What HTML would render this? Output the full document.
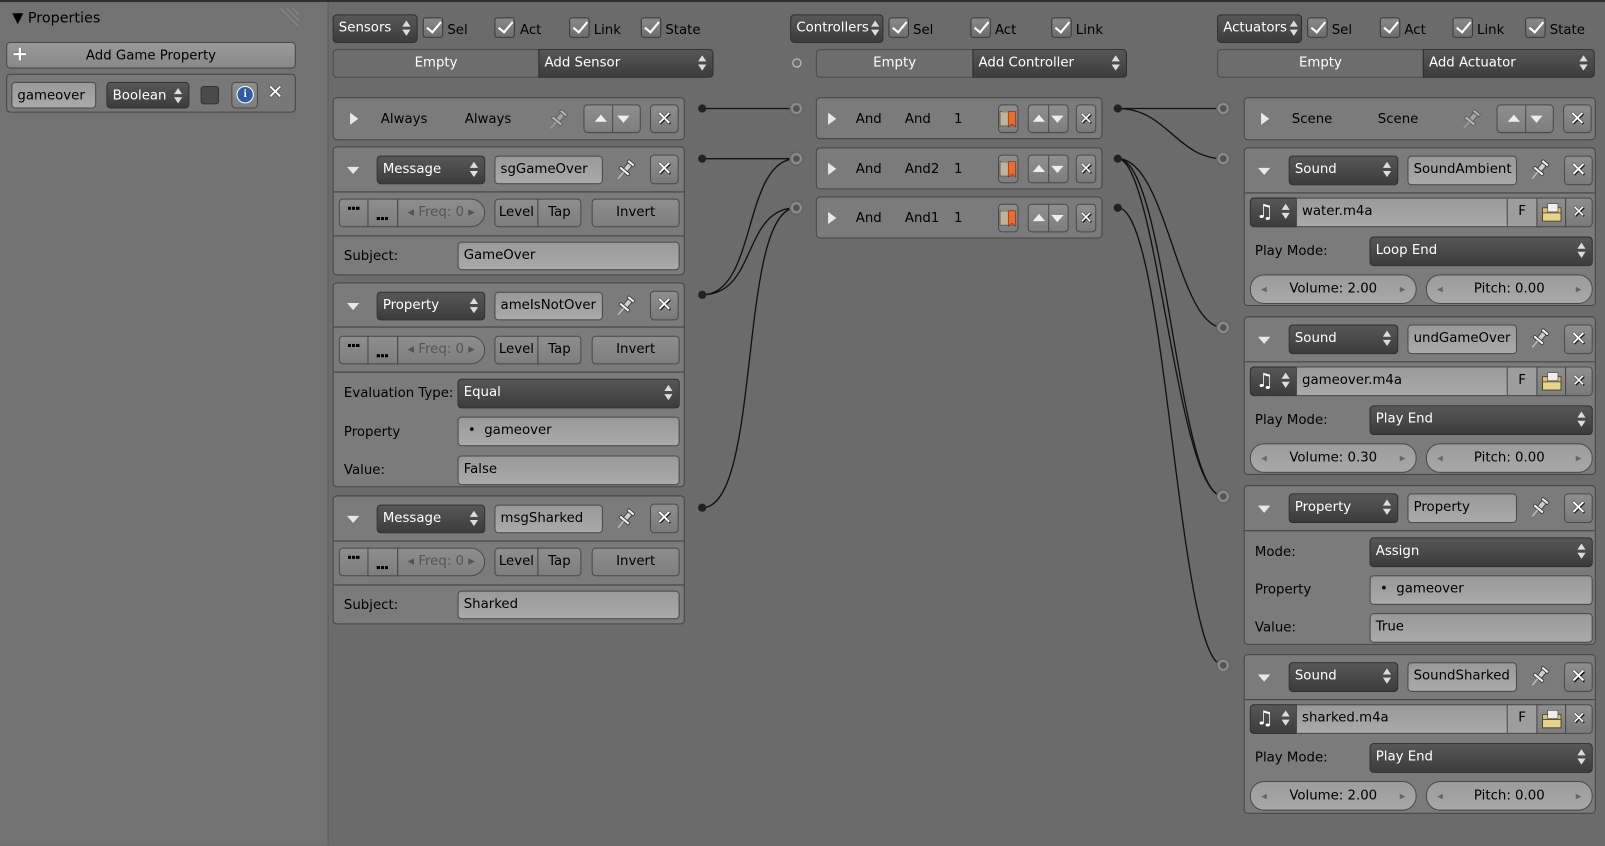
<!DOCTYPE html>
<html><head><meta charset="utf-8"><style>
*{box-sizing:border-box;margin:0;padding:0}
body{width:1605px;height:826px;overflow:hidden;background:#6b6b6b;font-family:"DejaVu Sans","Liberation Sans",sans-serif;font-size:13px;color:#000;position:relative}
#w{position:absolute;left:0;top:0;width:1568px;height:807px;transform:scale(1.02360);transform-origin:0 0}
.a{position:absolute}
.t{position:absolute;white-space:nowrap;line-height:16px}
.box{position:absolute;background:#7b7b7b;border:1px solid #454545;border-radius:4px}
.dd{position:absolute;background:linear-gradient(#575757,#3c3c3c);border:1px solid #2c2c2c;border-radius:4px;color:#fff;padding-left:5px;line-height:26px;white-space:nowrap}
.fld{position:absolute;background:linear-gradient(#999,#aaa);border:1px solid #4a4a4a;border-radius:4px;padding-left:5px;line-height:26px;white-space:nowrap;overflow:hidden}
.btn{position:absolute;background:linear-gradient(#8e8e8e,#7e7e7e);border:1px solid #4a4a4a;border-radius:4px;text-align:center;line-height:26px;white-space:nowrap}
.ud{position:absolute;right:6px;top:5px;width:8px;height:16px}
.ud:before{content:"";position:absolute;left:0;top:0;border-left:4px solid transparent;border-right:4px solid transparent;border-bottom:6px solid #ddd}
.ud:after{content:"";position:absolute;left:0;top:9px;border-left:4px solid transparent;border-right:4px solid transparent;border-top:6px solid #ddd}
.x{position:absolute;background:linear-gradient(#8e8e8e,#7a7a7a);border:1px solid #4a4a4a;border-radius:4px;color:#fff;text-align:center;font-weight:bold;font-size:19px;line-height:26px;text-shadow:0 0 1px #000,0 0 1px #000,1px 1px 0 #222}
.sep{position:absolute;left:0;right:0;height:1px;background:#3e3e3e}
.tri{position:absolute;width:0;height:0;border-top:6px solid transparent;border-bottom:6px solid transparent;border-left:8px solid #e8e8e8}
.trid{position:absolute;width:0;height:0;border-left:6px solid transparent;border-right:6px solid transparent;border-top:7px solid #e8e8e8}
.cb{position:absolute;width:20px;height:20px;background:linear-gradient(#8a8a8a,#6e6e6e);border:1px solid #3a3a3a;border-radius:3px}
.cb:after{content:"";position:absolute;left:6px;top:0px;width:6px;height:12px;border-right:2px solid #fff;border-bottom:2px solid #fff;transform:rotate(40deg)}
.updn{position:absolute;height:28px;width:56px;border:1px solid #4a4a4a;border-radius:4px;background:linear-gradient(#8e8e8e,#7e7e7e)}
.updn i{position:absolute;top:0;bottom:0;left:50%;width:1px;background:#4a4a4a}
.updn b{position:absolute;left:10px;top:9px;border-left:6px solid transparent;border-right:6px solid transparent;border-bottom:7px solid #eee}
.updn u{position:absolute;right:10px;top:10px;border-left:6px solid transparent;border-right:6px solid transparent;border-top:7px solid #eee}
.pill{position:absolute;background:linear-gradient(#9c9c9c,#a8a8a8);border:1px solid #4a4a4a;border-radius:14px;text-align:center;line-height:27px;white-space:nowrap}
.pill:before{content:"◂";position:absolute;left:10px;color:#666;font-size:11px}
.pill:after{content:"▸";position:absolute;right:10px;color:#666;font-size:11px}
.dot{position:absolute;width:8px;height:8px;border-radius:50%;background:#222}
.sock{position:absolute;width:14px;height:14px;border-radius:50%;background:radial-gradient(#555 30%,#999 40%,#444 80%)}
.pin{position:absolute;width:22px;height:22px}
.d3{position:absolute;left:8px;width:12px;height:3px;background:repeating-linear-gradient(90deg,#000 0 3px,transparent 3px 4px)}
.bk{position:absolute;width:20px;height:28px}
</style></head><body><div id="w">
<svg width="0" height="0" style="position:absolute"><defs>
<g id="pin"><g transform="rotate(40 11 11)"><rect x="7" y="1" width="8" height="3" rx="1" fill="#eee" stroke="#333" stroke-width=".8"/><rect x="8.5" y="4" width="5" height="7" fill="#ccc" stroke="#333" stroke-width=".8"/><rect x="5" y="11" width="12" height="3" rx="1" fill="#eee" stroke="#333" stroke-width=".8"/><path d="M11 14v8" stroke="#bbb" stroke-width="1.5"/></g></g>
<g id="bk"><rect x="2" y="7" width="12" height="14" fill="#bcb59c" stroke="#555" stroke-width=".8"/><rect x="4" y="5" width="10" height="3" fill="#8e8a7c"/><path d="M10 7h7v15l-3.5-3-3.5 3z" fill="#ef6a2c" stroke="#7a2a10" stroke-width=".6"/></g>
<g id="fold"><rect x="3" y="7" width="18" height="13" fill="#d6c27c" stroke="#4a3e1a" stroke-width=".8"/><rect x="8" y="3" width="10" height="8" fill="#eee" stroke="#444" stroke-width=".6"/><rect x="3" y="12" width="18" height="8" fill="#e6d38e" stroke="#4a3e1a" stroke-width=".8"/></g>
</defs></svg>
<div class="a" style="left:0;top:0;width:1568px;height:2px;background:#2e2e2e"></div>
<div class="a" style="left:0;top:2px;width:320px;height:824px;background:#727272"></div>
<div class="a" style="left:320px;top:2px;width:1px;height:824px;background:#5c5c5c"></div>
<svg class="a" style="left:272px;top:6px" width="22" height="22"><path d="M2 2l18 18M8 2l12 12M14 2l6 6" stroke="#8a8a8a" stroke-width="1"/></svg>
<div class="t" style="left:12px;top:10px;font-size:14px">▼ Properties</div>
<div class="btn" style="left:6px;top:41px;width:283px;height:26px;background:linear-gradient(#9a9a9a,#888)">Add Game Property</div>
<div class="t" style="left:11px;top:44px;font-size:20px;font-weight:bold;color:#fff;text-shadow:0 0 1px #000">+</div>
<div class="box" style="left:6px;top:72px;width:283px;height:38px;background:#787878"></div>
<div class="fld" style="left:11px;top:80px;width:83px;height:26px">gameover</div>
<div class="dd" style="left:104px;top:80px;width:81px;height:26px">Boolean<span class="ud"></span></div>
<div class="a" style="left:196px;top:84px;width:18px;height:18px;background:#4a4a4a;border:1px solid #333;border-radius:3px"></div>
<div class="btn" style="left:226px;top:80px;width:26px;height:26px"></div>
<div class="a" style="left:231px;top:84px;width:17px;height:17px;border-radius:50%;background:#2d5fa0;border:1px solid #fff;color:#fff;font-size:11px;font-weight:bold;text-align:center;line-height:15px;font-family:'Liberation Serif',serif">i</div>
<div class="t" style="left:261px;top:82px;color:#fff;font-weight:bold;font-size:19px;text-shadow:0 0 1px #000,0 0 1px #000">✕</div>

<div class="dd" style="left:325px;top:14px;width:83px;height:28px">Sensors<span class="ud"></span></div>
<div class="cb" style="left:413px;top:17px"></div><div class="t" style="left:437px;top:22px">Sel</div>
<div class="cb" style="left:483px;top:17px"></div><div class="t" style="left:508px;top:22px">Act</div>
<div class="cb" style="left:556px;top:17px"></div><div class="t" style="left:580px;top:22px">Link</div>
<div class="cb" style="left:626px;top:17px"></div><div class="t" style="left:650px;top:22px">State</div>
<div class="btn" style="left:325px;top:48px;width:202px;height:28px;background:#6d6d6d;color:#fff;border-radius:4px 0 0 4px">Empty</div>
<div class="dd" style="left:526px;top:48px;width:171px;height:28px;border-radius:0 4px 4px 0">Add Sensor<span class="ud"></span></div>

<div class="box" style="left:325px;top:95px;width:344px;height:42px">
 <div class="tri" style="left:16px;top:14px"></div>
 <div class="t" style="left:46px;top:13px">Always</div><div class="t" style="left:128px;top:13px">Always</div>
 <svg class="pin" style="left:208px;top:10px;opacity:.5"><use href="#pin"/></svg>
 <div class="updn" style="left:244px;top:6px"><i></i><b></b><u></u></div>
 <div class="x" style="left:309px;top:6px;width:28px;height:28px">✕</div>
</div>
<div class="box" style="left:325px;top:143px;width:344px;height:126px">
 <div class="trid" style="left:13px;top:19px"></div>
 <div class="dd" style="left:42px;top:8px;width:106px;height:28px">Message<span class="ud"></span></div>
 <div class="fld" style="left:157px;top:8px;width:106px;height:28px">sgGameOver</div>
 <svg class="pin" style="left:274px;top:11px"><use href="#pin"/></svg>
 <div class="x" style="left:309px;top:7px;width:28px;height:29px">✕</div>
 <div class="sep" style="top:43px"></div>
 <div class="btn" style="left:5px;top:50px;width:29px;height:28px;border-radius:4px 0 0 4px"><span class="d3" style="top:7px"></span></div>
 <div class="btn" style="left:33px;top:50px;width:30px;height:28px;border-radius:0"><span class="d3" style="top:17px"></span></div>
 <div class="btn" style="left:62px;top:50px;width:86px;height:28px;border-radius:0 14px 14px 0;color:#555">◂ Freq: 0 ▸</div>
 <div class="btn" style="left:157px;top:50px;width:43px;height:28px;border-radius:4px 0 0 4px">Level</div>
 <div class="btn" style="left:199px;top:50px;width:43px;height:28px;border-radius:0 4px 4px 0">Tap</div>
 <div class="btn" style="left:252px;top:50px;width:86px;height:28px">Invert</div>
 <div class="sep" style="top:86px"></div>
 <div class="t" style="left:10px;top:99px">Subject:</div>
 <div class="fld" style="left:121px;top:92px;width:217px;height:28px">GameOver</div>
</div>
<div class="box" style="left:325px;top:276px;width:344px;height:200px">
 <div class="trid" style="left:13px;top:19px"></div>
 <div class="dd" style="left:42px;top:8px;width:106px;height:28px">Property<span class="ud"></span></div>
 <div class="fld" style="left:157px;top:8px;width:106px;height:28px">ameIsNotOver</div>
 <svg class="pin" style="left:274px;top:11px"><use href="#pin"/></svg>
 <div class="x" style="left:309px;top:7px;width:28px;height:29px">✕</div>
 <div class="sep" style="top:42px"></div>
 <div class="btn" style="left:5px;top:51px;width:29px;height:28px;border-radius:4px 0 0 4px"><span class="d3" style="top:7px"></span></div>
 <div class="btn" style="left:33px;top:51px;width:30px;height:28px;border-radius:0"><span class="d3" style="top:17px"></span></div>
 <div class="btn" style="left:62px;top:51px;width:86px;height:28px;border-radius:0 14px 14px 0;color:#555">◂ Freq: 0 ▸</div>
 <div class="btn" style="left:157px;top:51px;width:43px;height:28px;border-radius:4px 0 0 4px">Level</div>
 <div class="btn" style="left:199px;top:51px;width:43px;height:28px;border-radius:0 4px 4px 0">Tap</div>
 <div class="btn" style="left:252px;top:51px;width:86px;height:28px">Invert</div>
 <div class="sep" style="top:86px"></div>
 <div class="t" style="left:10px;top:100px">Evaluation Type:</div>
 <div class="dd" style="left:121px;top:93px;width:217px;height:29px">Equal<span class="ud"></span></div>
 <div class="t" style="left:10px;top:138px">Property</div>
 <div class="fld" style="left:121px;top:130px;width:217px;height:29px">&nbsp;• &nbsp;gameover</div>
 <div class="t" style="left:10px;top:175px">Value:</div>
 <div class="fld" style="left:121px;top:168px;width:217px;height:29px">False</div>
</div>
<div class="box" style="left:325px;top:484px;width:344px;height:126px">
 <div class="trid" style="left:13px;top:19px"></div>
 <div class="dd" style="left:42px;top:8px;width:106px;height:28px">Message<span class="ud"></span></div>
 <div class="fld" style="left:157px;top:8px;width:106px;height:28px">msgSharked</div>
 <svg class="pin" style="left:274px;top:11px"><use href="#pin"/></svg>
 <div class="x" style="left:309px;top:7px;width:28px;height:29px">✕</div>
 <div class="sep" style="top:43px"></div>
 <div class="btn" style="left:5px;top:50px;width:29px;height:28px;border-radius:4px 0 0 4px"><span class="d3" style="top:7px"></span></div>
 <div class="btn" style="left:33px;top:50px;width:30px;height:28px;border-radius:0"><span class="d3" style="top:17px"></span></div>
 <div class="btn" style="left:62px;top:50px;width:86px;height:28px;border-radius:0 14px 14px 0;color:#555">◂ Freq: 0 ▸</div>
 <div class="btn" style="left:157px;top:50px;width:43px;height:28px;border-radius:4px 0 0 4px">Level</div>
 <div class="btn" style="left:199px;top:50px;width:43px;height:28px;border-radius:0 4px 4px 0">Tap</div>
 <div class="btn" style="left:252px;top:50px;width:86px;height:28px">Invert</div>
 <div class="sep" style="top:86px"></div>
 <div class="t" style="left:10px;top:99px">Subject:</div>
 <div class="fld" style="left:121px;top:92px;width:217px;height:28px">Sharked</div>
</div>

<div class="dd" style="left:772px;top:14px;width:91px;height:28px">Controllers<span class="ud" style="right:3px"></span></div>
<div class="cb" style="left:868px;top:17px"></div><div class="t" style="left:892px;top:22px">Sel</div>
<div class="cb" style="left:948px;top:17px"></div><div class="t" style="left:972px;top:22px">Act</div>
<div class="cb" style="left:1027px;top:17px"></div><div class="t" style="left:1051px;top:22px">Link</div>
<div class="a" style="left:774px;top:57px;width:9px;height:9px;border-radius:50%;border:1px solid #ccc"></div>
<div class="btn" style="left:797px;top:48px;width:154px;height:28px;background:#6d6d6d;color:#fff;border-radius:4px 0 0 4px">Empty</div>
<div class="dd" style="left:950px;top:48px;width:151px;height:28px;border-radius:0 4px 4px 0">Add Controller<span class="ud"></span></div>

<div class="box" style="left:797px;top:95px;width:280px;height:41px">
 <div class="tri" style="left:11px;top:14px"></div><div class="t" style="left:38px;top:13px">And</div><div class="t" style="left:86px;top:13px">And</div><div class="t" style="left:134px;top:13px">1</div>
 <div class="btn" style="left:177px;top:6px;width:20px;height:28px"></div><svg class="bk" style="left:177px;top:6px"><use href="#bk"/></svg>
 <div class="updn" style="left:206px;top:6px;width:40px"><i></i><b style="left:4px"></b><u style="right:4px"></u></div>
 <div class="x" style="left:253px;top:6px;width:20px;height:28px;font-size:16px">✕</div>
</div>
<div class="box" style="left:797px;top:144px;width:280px;height:41px">
 <div class="tri" style="left:11px;top:14px"></div><div class="t" style="left:38px;top:13px">And</div><div class="t" style="left:86px;top:13px">And2</div><div class="t" style="left:134px;top:13px">1</div>
 <div class="btn" style="left:177px;top:6px;width:20px;height:28px"></div><svg class="bk" style="left:177px;top:6px"><use href="#bk"/></svg>
 <div class="updn" style="left:206px;top:6px;width:40px"><i></i><b style="left:4px"></b><u style="right:4px"></u></div>
 <div class="x" style="left:253px;top:6px;width:20px;height:28px;font-size:16px">✕</div>
</div>
<div class="box" style="left:797px;top:192px;width:280px;height:41px">
 <div class="tri" style="left:11px;top:14px"></div><div class="t" style="left:38px;top:13px">And</div><div class="t" style="left:86px;top:13px">And1</div><div class="t" style="left:134px;top:13px">1</div>
 <div class="btn" style="left:177px;top:6px;width:20px;height:28px"></div><svg class="bk" style="left:177px;top:6px"><use href="#bk"/></svg>
 <div class="updn" style="left:206px;top:6px;width:40px"><i></i><b style="left:4px"></b><u style="right:4px"></u></div>
 <div class="x" style="left:253px;top:6px;width:20px;height:28px;font-size:16px">✕</div>
</div>

<div class="dd" style="left:1189px;top:14px;width:83px;height:28px">Actuators<span class="ud" style="right:3px"></span></div>
<div class="cb" style="left:1277px;top:17px"></div><div class="t" style="left:1301px;top:22px">Sel</div>
<div class="cb" style="left:1348px;top:17px"></div><div class="t" style="left:1372px;top:22px">Act</div>
<div class="cb" style="left:1419px;top:17px"></div><div class="t" style="left:1443px;top:22px">Link</div>
<div class="cb" style="left:1490px;top:17px"></div><div class="t" style="left:1514px;top:22px">State</div>
<div class="btn" style="left:1189px;top:48px;width:202px;height:28px;background:#6d6d6d;color:#fff;border-radius:4px 0 0 4px">Empty</div>
<div class="dd" style="left:1390px;top:48px;width:168px;height:28px;border-radius:0 4px 4px 0">Add Actuator<span class="ud"></span></div>

<div class="box" style="left:1215px;top:95px;width:344px;height:42px">
 <div class="tri" style="left:16px;top:14px"></div>
 <div class="t" style="left:46px;top:13px">Scene</div><div class="t" style="left:130px;top:13px">Scene</div>
 <svg class="pin" style="left:210px;top:10px;opacity:.5"><use href="#pin"/></svg>
 <div class="updn" style="left:246px;top:6px"><i></i><b></b><u></u></div>
 <div class="x" style="left:311px;top:6px;width:28px;height:28px">✕</div>
</div>

<div class="box" style="left:1215px;top:144px;width:344px;height:155px">
 <div class="trid" style="left:13px;top:19px"></div>
 <div class="dd" style="left:43px;top:7px;width:107px;height:29px">Sound<span class="ud"></span></div>
 <div class="fld" style="left:159px;top:7px;width:107px;height:29px">SoundAmbient</div>
 <svg class="pin" style="left:277px;top:10px"><use href="#pin"/></svg>
 <div class="x" style="left:312px;top:7px;width:28px;height:29px">✕</div>
 <div class="sep" style="top:43px"></div>
 <div class="dd" style="left:5px;top:48px;width:46px;height:29px;border-radius:4px 0 0 4px;font-size:19px">♫<span class="ud"></span></div>
 <div class="fld" style="left:50px;top:48px;width:240px;height:29px;border-radius:0">water.m4a</div>
 <div class="btn" style="left:256px;top:48px;width:30px;height:29px;border-radius:0;background:#9d9d9d">F</div>
 <div class="btn" style="left:285px;top:48px;width:29px;height:29px;border-radius:0"><svg width="24" height="24" style="margin-top:2px"><use href="#fold"/></svg></div>
 <div class="x" style="left:313px;top:48px;width:27px;height:29px;border-radius:0 4px 4px 0;font-size:16px">✕</div>
 <div class="t" style="left:10px;top:93px">Play Mode:</div>
 <div class="dd" style="left:122px;top:86px;width:218px;height:29px">Loop End<span class="ud"></span></div>
 <div class="pill" style="left:5px;top:123px;width:163px;height:29px">Volume: 2.00</div>
 <div class="pill" style="left:177px;top:123px;width:163px;height:29px">Pitch: 0.00</div>
</div>
<div class="box" style="left:1215px;top:309px;width:344px;height:155px">
 <div class="trid" style="left:13px;top:19px"></div>
 <div class="dd" style="left:43px;top:7px;width:107px;height:29px">Sound<span class="ud"></span></div>
 <div class="fld" style="left:159px;top:7px;width:107px;height:29px">undGameOver</div>
 <svg class="pin" style="left:277px;top:10px"><use href="#pin"/></svg>
 <div class="x" style="left:312px;top:7px;width:28px;height:29px">✕</div>
 <div class="sep" style="top:43px"></div>
 <div class="dd" style="left:5px;top:48px;width:46px;height:29px;border-radius:4px 0 0 4px;font-size:19px">♫<span class="ud"></span></div>
 <div class="fld" style="left:50px;top:48px;width:240px;height:29px;border-radius:0">gameover.m4a</div>
 <div class="btn" style="left:256px;top:48px;width:30px;height:29px;border-radius:0;background:#9d9d9d">F</div>
 <div class="btn" style="left:285px;top:48px;width:29px;height:29px;border-radius:0"><svg width="24" height="24" style="margin-top:2px"><use href="#fold"/></svg></div>
 <div class="x" style="left:313px;top:48px;width:27px;height:29px;border-radius:0 4px 4px 0;font-size:16px">✕</div>
 <div class="t" style="left:10px;top:93px">Play Mode:</div>
 <div class="dd" style="left:122px;top:86px;width:218px;height:29px">Play End<span class="ud"></span></div>
 <div class="pill" style="left:5px;top:123px;width:163px;height:29px">Volume: 0.30</div>
 <div class="pill" style="left:177px;top:123px;width:163px;height:29px">Pitch: 0.00</div>
</div>
<div class="box" style="left:1215px;top:474px;width:344px;height:156px">
 <div class="trid" style="left:13px;top:19px"></div>
 <div class="dd" style="left:43px;top:7px;width:107px;height:29px">Property<span class="ud"></span></div>
 <div class="fld" style="left:159px;top:7px;width:107px;height:29px">Property</div>
 <svg class="pin" style="left:277px;top:10px"><use href="#pin"/></svg>
 <div class="x" style="left:312px;top:7px;width:28px;height:29px">✕</div>
 <div class="sep" style="top:43px"></div>
 <div class="t" style="left:10px;top:57px">Mode:</div>
 <div class="dd" style="left:122px;top:50px;width:218px;height:29px">Assign<span class="ud"></span></div>
 <div class="t" style="left:10px;top:94px">Property</div>
 <div class="fld" style="left:122px;top:87px;width:218px;height:29px">&nbsp;• &nbsp;gameover</div>
 <div class="t" style="left:10px;top:131px">Value:</div>
 <div class="fld" style="left:122px;top:124px;width:218px;height:29px">True</div>
</div>
<div class="box" style="left:1215px;top:639px;width:344px;height:156px">
 <div class="trid" style="left:13px;top:19px"></div>
 <div class="dd" style="left:43px;top:7px;width:107px;height:29px">Sound<span class="ud"></span></div>
 <div class="fld" style="left:159px;top:7px;width:107px;height:29px">SoundSharked</div>
 <svg class="pin" style="left:277px;top:10px"><use href="#pin"/></svg>
 <div class="x" style="left:312px;top:7px;width:28px;height:29px">✕</div>
 <div class="sep" style="top:43px"></div>
 <div class="dd" style="left:5px;top:48px;width:46px;height:29px;border-radius:4px 0 0 4px;font-size:19px">♫<span class="ud"></span></div>
 <div class="fld" style="left:50px;top:48px;width:240px;height:29px;border-radius:0">sharked.m4a</div>
 <div class="btn" style="left:256px;top:48px;width:30px;height:29px;border-radius:0;background:#9d9d9d">F</div>
 <div class="btn" style="left:285px;top:48px;width:29px;height:29px;border-radius:0"><svg width="24" height="24" style="margin-top:2px"><use href="#fold"/></svg></div>
 <div class="x" style="left:313px;top:48px;width:27px;height:29px;border-radius:0 4px 4px 0;font-size:16px">✕</div>
 <div class="t" style="left:10px;top:93px">Play Mode:</div>
 <div class="dd" style="left:122px;top:86px;width:218px;height:29px">Play End<span class="ud"></span></div>
 <div class="pill" style="left:5px;top:123px;width:163px;height:29px">Volume: 2.00</div>
 <div class="pill" style="left:177px;top:123px;width:163px;height:29px">Pitch: 0.00</div>
</div>

<svg class="a" style="left:0;top:0" width="1568" height="807">
<g fill="none" stroke="#111" stroke-width="1.3">
<path d="M686 106L778 106"/>
<path d="M686 155L778 155"/>
<path d="M686 288C740 288 725 155 778 155"/>
<path d="M686 288C740 288 725 203 778 203"/>
<path d="M686 496C745 496 720 203 778 203"/>
<path d="M1092 106L1195 106"/>
<path d="M1092 106C1140 106 1150 155 1195 155"/>
<path d="M1092 155C1140 155 1150 320 1195 320"/>
<path d="M1092 155C1140 155 1150 485 1195 485"/>
<path d="M1092 155C1130 155 1150 485 1195 485"/>
<path d="M1092 203C1140 203 1150 650 1195 650"/>
</g>
</svg>
<div class="dot" style="left:682px;top:102px"></div>
<div class="dot" style="left:682px;top:151px"></div>
<div class="dot" style="left:682px;top:284px"></div>
<div class="dot" style="left:682px;top:492px"></div>
<div class="sock" style="left:771px;top:99px"></div>
<div class="sock" style="left:771px;top:148px"></div>
<div class="sock" style="left:771px;top:196px"></div>
<div class="dot" style="left:1088px;top:102px"></div>
<div class="dot" style="left:1088px;top:151px"></div>
<div class="dot" style="left:1088px;top:199px"></div>
<div class="sock" style="left:1188px;top:99px"></div>
<div class="sock" style="left:1188px;top:148px"></div>
<div class="sock" style="left:1188px;top:313px"></div>
<div class="sock" style="left:1188px;top:478px"></div>
<div class="sock" style="left:1188px;top:643px"></div>
</div></body></html>
